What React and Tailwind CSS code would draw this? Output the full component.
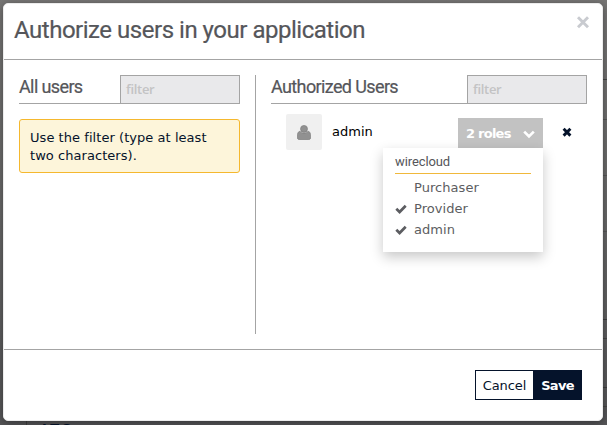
import React from "react";

const roles = [
  { name: "Purchaser", on: false },
  { name: "Provider", on: true },
  { name: "admin", on: true },
];

const Close = ({ className }) => (
  <svg viewBox="0 0 14 14" className={className} fill="none" stroke="currentColor">
    <path d="M2 2.2l10 10M12 2.2l-10 10" strokeWidth="2.9" />
  </svg>
);

const Remove = ({ className }) => (
  <svg viewBox="0 0 10 10" className={className} fill="none" stroke="currentColor">
    <path d="M1.6 1.8l6.8 6.8M8.4 1.8l-6.8 6.8" strokeWidth="2.9" />
  </svg>
);

const Check = () => (
  <svg viewBox="0 0 12 10" className="block h-[10px] w-[12px]" fill="none" stroke="currentColor">
    <path d="M1.3 4.8L4.6 8L10.7 1.7" strokeWidth="2.7" />
  </svg>
);

const User = () => (
  <svg viewBox="0 0 14 15" className="block h-[15px] w-[14px]">
    <path
      d="M3 6.2C1 6.5 0.2 8.7 0.2 11.8C0.2 13.6 1 14.7 2.6 14.7H11.4C13 14.7 13.8 13.6 13.8 11.8C13.8 8.7 13 6.5 11 6.2C9.8 7.6 8.5 8.1 7 8.1S4.2 7.6 3 6.2Z"
      fill="#919191"
      stroke="#777"
      strokeWidth="0.6"
    />
    <circle cx="7" cy="3.9" r="3.5" fill="#919191" stroke="#777" strokeWidth="0.6" />
  </svg>
);

function Heading({ title }) {
  return (
    <div className="flex h-[29px] border-b border-[#a4a4a4]">
      <h2 className="flex-1 whitespace-nowrap pt-px font-['Roboto',sans-serif] text-[18px] leading-[22px] tracking-[-0.62px] text-[#55565a] [-webkit-text-stroke:0.2px_#55565a]">
        {title}
      </h2>
      <div className="h-[28px] w-[120px] border border-b-0 border-[#a4a4a4] bg-[#e9e9eb] pl-[5px] pt-[3px] font-['Open_Sans',sans-serif] text-[13px] font-semibold leading-[20px] tracking-[-0.3px] text-[#c3c3c4]">
        filter
      </div>
    </div>
  );
}

export default function App() {
  return (
    <div className="relative h-[425px] w-[607px] overflow-hidden bg-[#666] font-['DejaVu_Sans',sans-serif] text-[13px]">
      <div className="absolute inset-0 bg-linear-to-b from-[#777675] via-[#696969] to-[#565658]" />
      <div className="absolute right-0 top-[79px] h-px w-[5px] bg-[#464646]" />
      <div className="absolute right-0 top-[119px] h-px w-[5px] bg-[#575757]" />
      <div className="absolute right-0 top-[175px] h-px w-[5px] bg-[#575757]" />
      <div className="absolute right-0 top-[231px] h-px w-[5px] bg-[#575757]" />
      <div className="absolute right-0 top-[319px] h-px w-[5px] bg-[#3f3f40]" />
      <div className="absolute right-0 top-[338px] h-px w-[5px] bg-[#464646]" />
      <div className="absolute right-0 top-[387px] h-px w-[5px] bg-[#3f3f40]" />
      <div className="absolute right-0 top-[406px] h-px w-[5px] bg-[#464646]" />
      <div className="absolute left-[26px] top-[421px] h-1 w-px bg-[#3f3f40]" />
      <div className="absolute left-[42px] top-[421px] text-[13px] font-bold leading-[15px] tracking-[2px] text-[#05132b]">
        LTC
      </div>

      <div className="relative ml-[3px] flex w-[600px] flex-col pt-[3px]">
        <div className="flex h-[418px] flex-col rounded-[5px] border border-[#ececec] bg-white shadow-[0_2px_8px_rgba(0,0,0,0.4)]">
          <header className="flex h-[56px] shrink-0 justify-between border-b border-[#a4a4a4] pl-[10px] pr-[12px]">
            <h1 className="whitespace-nowrap pt-[10px] font-['Roboto',sans-serif] text-[24px] leading-[32px] tracking-[-0.48px] text-[#55565a] [-webkit-text-stroke:0.2px_#55565a]">
              Authorize users in your application
            </h1>
            <Close className="mt-[11px] h-[14px] w-[14px] text-[#c9cbd0]" />
          </header>

          <main className="flex h-[289px] shrink-0 pl-[15px] pr-[15px] pt-[15px]">
            <section className="w-[221px]">
              <Heading title="All users" />
              <p className="mt-[15px] h-[54px] whitespace-nowrap rounded-[3px] border border-[#f5b82e] bg-[#fdf5da] pl-[10px] pt-[9px] leading-[18px] tracking-[0.05px] text-[#05132b]">
                Use the filter (type at least
                <br />
                two characters).
              </p>
            </section>
            <div className="mx-[15px] h-[259px] w-px bg-[#a4a4a4]" />
            <section className="relative w-[316px]">
              <Heading title="Authorized Users" />
              <div className="mt-[10px] flex h-[36px] pl-[15px]">
                <div className="flex h-[36px] w-[36px] items-center justify-center rounded-[2px] bg-[#f0f0f0]">
                  <User />
                </div>
                <span className="w-[136px] pl-[10px] pt-[8px] leading-[20px] text-black">admin</span>
                <button className="mt-[4px] flex h-[30px] w-[85px] items-center justify-between bg-[#c2c2c2] pl-[8px] pr-[8px] font-bold text-white">
                  <span className="whitespace-nowrap pt-px tracking-[-0.75px]">2 roles</span>
                  <svg viewBox="0 0 12 9" className="mt-[2px] h-[9px] w-[12px]" fill="none" stroke="currentColor">
                    <path d="M1.2 1.6L6 6.4L10.8 1.6" strokeWidth="2.7" />
                  </svg>
                </button>
                <Remove className="ml-[19px] mt-[13px] h-[10px] w-[10px] text-[#05132b]" />
              </div>
              <div className="absolute left-[112px] top-[73px] h-[104px] w-[160px] bg-white pl-[12px] pr-[12px] shadow-[0_5px_12px_rgba(0,0,0,0.22)]">
                <div className="mb-[3px] h-[26px] border-b border-[#f0b83b] pt-[5px] font-['Roboto',sans-serif] text-[13px] leading-[18px] tracking-[-0.1px] text-[#55565a]">
                  wirecloud
                </div>
                {roles.map((r) => (
                  <div key={r.name} className="flex h-[21px] items-center text-[#5c5d61]">
                    <span className="w-[19px]">{r.on && <Check />}</span>
                    <span className="leading-[20px] tracking-[0.05px]">{r.name}</span>
                  </div>
                ))}
              </div>
            </section>
          </main>

          <footer className="flex flex-1 justify-end border-t border-[#a4a4a4] pr-[20px] pt-[20px]">
            <button className="h-[30px] w-[58px] whitespace-nowrap border border-r-0 border-[#05132b] pt-px tracking-[-0.1px] text-[#05132b]">
              Cancel
            </button>
            <button className="h-[30px] w-[49px] bg-[#05132b] pt-px font-bold tracking-[-0.7px] text-white">
              Save
            </button>
          </footer>
        </div>
      </div>
    </div>
  );
}
